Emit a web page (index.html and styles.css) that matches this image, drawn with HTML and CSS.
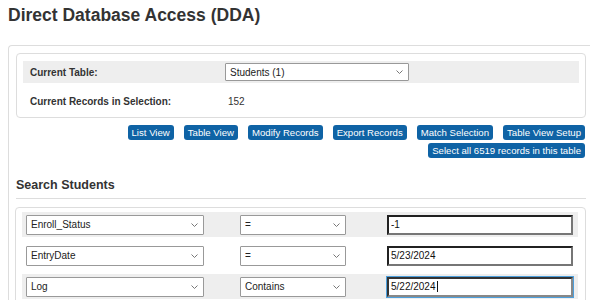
FILE: index.html
```html
<!DOCTYPE html>
<html lang="en">
<head>
    <meta charset="UTF-8">
    <title>Direct Database Access (DDA)</title>
    <link rel="stylesheet" href="styles.css">
</head>
<body>
    <h1 class="page-title">Direct Database Access (DDA)</h1>
    <div class="panel">
        <div class="current-box">
            <div class="info-row shaded">
                <span class="info-label">Current Table:</span>
                <span class="select-wrap table-select">
                    <select><option>Students (1)</option></select>
                    <svg class="chevron" width="7" height="4" viewBox="0 0 7 4"><path d="M0.5 0.5 L3.5 3.5 L6.5 0.5" fill="none" stroke="#777" stroke-width="1"/></svg>
                </span>
            </div>
            <div class="info-row tall">
                <span class="info-label">Current Records in Selection:</span>
                <span class="info-value">152</span>
            </div>
        </div>

        <div class="toolbar">
            <div class="toolbar-row">
                <button class="btn">List View</button>
                <button class="btn">Table View</button>
                <button class="btn">Modify Records</button>
                <button class="btn">Export Records</button>
                <button class="btn">Match Selection</button>
                <button class="btn">Table View Setup</button>
            </div>
            <div class="toolbar-row">
                <button class="btn">Select all 6519 records in this table</button>
            </div>
        </div>

        <h2 class="section-title">Search Students</h2>
        <div class="search-box">
            <div class="search-row shaded">
                <span class="select-wrap field-select">
                    <select><option>Enroll_Status</option></select>
                    <svg class="chevron" width="7" height="4" viewBox="0 0 7 4"><path d="M0.5 0.5 L3.5 3.5 L6.5 0.5" fill="none" stroke="#777" stroke-width="1"/></svg>
                </span>
                <span class="select-wrap op-select">
                    <select><option>=</option></select>
                    <svg class="chevron" width="7" height="4" viewBox="0 0 7 4"><path d="M0.5 0.5 L3.5 3.5 L6.5 0.5" fill="none" stroke="#777" stroke-width="1"/></svg>
                </span>
                <input class="value-input" type="text" value="-1">
            </div>
            <div class="search-row">
                <span class="select-wrap field-select">
                    <select><option>EntryDate</option></select>
                    <svg class="chevron" width="7" height="4" viewBox="0 0 7 4"><path d="M0.5 0.5 L3.5 3.5 L6.5 0.5" fill="none" stroke="#777" stroke-width="1"/></svg>
                </span>
                <span class="select-wrap op-select">
                    <select><option>=</option></select>
                    <svg class="chevron" width="7" height="4" viewBox="0 0 7 4"><path d="M0.5 0.5 L3.5 3.5 L6.5 0.5" fill="none" stroke="#777" stroke-width="1"/></svg>
                </span>
                <input class="value-input" type="text" value="5/23/2024">
            </div>
            <div class="search-row shaded">
                <span class="select-wrap field-select">
                    <select><option>Log</option></select>
                    <svg class="chevron" width="7" height="4" viewBox="0 0 7 4"><path d="M0.5 0.5 L3.5 3.5 L6.5 0.5" fill="none" stroke="#777" stroke-width="1"/></svg>
                </span>
                <span class="select-wrap op-select">
                    <select><option>Contains</option></select>
                    <svg class="chevron" width="7" height="4" viewBox="0 0 7 4"><path d="M0.5 0.5 L3.5 3.5 L6.5 0.5" fill="none" stroke="#777" stroke-width="1"/></svg>
                </span>
                <span class="value-input focused">5/22/2024<span class="caret"></span></span>
            </div>
        </div>
    </div>
</body>
</html>
```

FILE: styles.css
```css
* {
    box-sizing: border-box;
}
html {
    height: 300px;
    overflow: hidden;
}
body {
    margin: 0;
    padding: 4px 0 0 8px;
    font-family: "Liberation Sans", Arial, sans-serif;
    color: #333;
    background: #fff;
    height: 300px;
    overflow: hidden;
}
.page-title {
    margin: 0 0 19px;
    font-size: 17.5px;
    line-height: 22px;
    font-weight: bold;
    color: #333;
}
.panel {
    border: 1px solid #ddd;
    border-right: none;
    border-radius: 4px 0 0 0;
    padding: 7px 4px 0 7px;
}
.current-box {
    border: 1px solid #ddd;
    border-radius: 4px;
    padding: 7px 6px;
}
.info-row {
    display: grid;
    grid-template-columns: 195px 1fr;
    align-items: center;
    padding-left: 7px;
    height: 22px;
    font-size: 10px;
}
.info-row.tall {
    height: 27px;
    padding-top: 9px;
}
.shaded {
    background: #eee;
}
.info-label {
    font-weight: bold;
}
.info-value {
    padding-left: 3px;
}

/* selects */
.select-wrap {
    position: relative;
    display: block;
    height: 20px;
}
.select-wrap select {
    appearance: none;
    -webkit-appearance: none;
    display: block;
    width: 100%;
    height: 100%;
    font-family: "Liberation Sans", Arial, sans-serif;
    font-size: 10px;
    color: #222;
    background: #fff;
    border: 1px solid #999;
    border-radius: 1px;
    padding: 0 14px 0 4px;
}
.chevron {
    position: absolute;
    right: 6px;
    top: 50%;
    margin-top: -2px;
}
.table-select {
    width: 184px;
    height: 18px;
}
.field-select {
    width: 178px;
}
.op-select {
    width: 106px;
}

/* buttons */
.toolbar {
    margin-top: 7px;
    padding-right: 1px;
    display: flex;
    flex-direction: column;
    gap: 3px;
}
.toolbar-row {
    display: flex;
    justify-content: flex-end;
    gap: 10px;
}
.btn {
    font-family: "Liberation Sans", Arial, sans-serif;
    font-size: 9.6px;
    line-height: 15px;
    height: 15px;
    padding: 0 4px;
    color: #fff;
    background: #0f63a5;
    border: none;
    border-radius: 3px;
}

/* search */
.section-title {
    margin: 20px 0 0;
    padding-bottom: 5px;
    font-size: 12.5px;
    line-height: 15px;
    font-weight: bold;
    border-bottom: 1px solid #ddd;
}
.search-box {
    margin-top: 8px;
    margin-left: -1px;
    border: 1px solid #ddd;
    border-radius: 4px;
    padding: 4px 7px 4px 6px;
    display: flex;
    flex-direction: column;
    gap: 6px;
}
.search-row {
    display: grid;
    grid-template-columns: 214px 147px 1fr;
    align-items: center;
    height: 25px;
    padding-left: 4px;
}
.value-input {
    display: block;
    width: 186px;
    height: 20px;
    font-family: "Liberation Sans", Arial, sans-serif;
    font-size: 10px;
    line-height: 16px;
    color: #111;
    padding: 0 2px;
    border: 2px inset #767676;
    background: #fff;
}
.value-input.focused {
    border: 2px solid #333;
    border-right-color: #888;
    border-bottom-color: #888;
    outline: 1px solid #4d9fdc;
}
.caret {
    display: inline-block;
    width: 1px;
    height: 11px;
    margin-left: 1px;
    vertical-align: -2px;
    background: #111;
}
```
